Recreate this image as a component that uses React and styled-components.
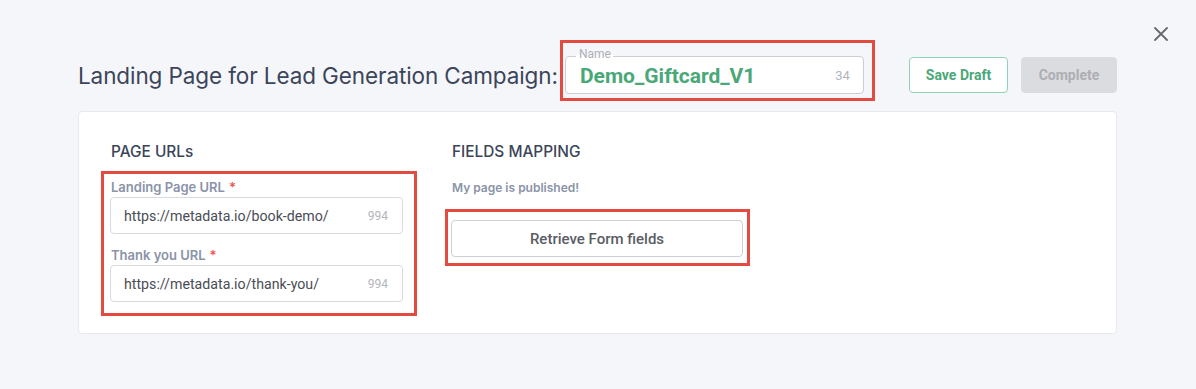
import React from 'react';
import styled, { createGlobalStyle } from 'styled-components';

const GlobalStyle = createGlobalStyle`
  html, body {
    margin: 0;
    padding: 0;
    background: #f5f6fa;
  }
  body {
    font-family: Roboto, "Liberation Sans", Arial, sans-serif;
    -webkit-font-smoothing: antialiased;
  }
  * { box-sizing: border-box; }
`;

const Page = styled.div`
  position: relative;
  width: 1196px;
  height: 389px;
  padding: 57px 79px 0 78px;
  background: #f5f6fa;
`;

const CloseButton = styled.button`
  position: absolute;
  top: 26px;
  right: 27px;
  width: 16px;
  height: 16px;
  padding: 0;
  border: none;
  background: transparent;
  cursor: pointer;
  display: flex;
  align-items: center;
  justify-content: center;
`;

const Header = styled.div`
  display: flex;
  align-items: center;
  height: 36px;
`;

const Title = styled.h1`
  margin: 0;
  font-family: Inter, "Liberation Sans", sans-serif;
  font-size: 22.5px;
  font-weight: 400;
  color: #3b4559;
  white-space: nowrap;
  letter-spacing: -0.1px;
`;

/* annotation frame drawn over the content */
const Highlight = styled.div`
  position: relative;
  margin-left: ${(p) => p.$ml || 0}px;

  &::after {
    content: '';
    position: absolute;
    top: ${(p) => p.$t}px;
    right: ${(p) => p.$r}px;
    bottom: ${(p) => p.$b}px;
    left: ${(p) => p.$l}px;
    border: 3px solid #e34b40;
    pointer-events: none;
  }
`;

const NameField = styled.div`
  position: relative;
  width: 299px;
  height: 38px;
  border: 1px solid #cdced3;
  border-radius: 4px;
  background: #fff;
  display: flex;
  align-items: center;
  padding: 0 13px 0 14px;
`;

const FloatLabel = styled.span`
  position: absolute;
  top: -10px;
  left: 10px;
  padding: 0 2px 0 3px;
  background: linear-gradient(to bottom, #f5f6fa 55%, #fff 55%);
  font-size: 12px;
  line-height: 15px;
  color: #aeb0b8;
`;

const NameValue = styled.span`
  flex: 1;
  font-size: 21px;
  font-weight: 700;
  color: #4aa878;
  padding-top: 2px;
`;

const Counter = styled.span`
  font-size: ${(p) => p.$size || 12}px;
  color: #b3b5bc;
`;

const Actions = styled.div`
  margin-left: auto;
  display: flex;
  gap: 13px;
`;

const ActionButton = styled.button`
  height: 36px;
  width: ${(p) => p.$w}px;
  border-radius: 4px;
  font-family: Roboto, "Liberation Sans", sans-serif;
  font-size: 14px;
  font-weight: 700;
  cursor: ${(p) => (p.disabled ? 'default' : 'pointer')};
  border: 1px solid ${(p) => (p.$primary ? '#90d2b4' : '#dbdcdf')};
  background: ${(p) => (p.$primary ? '#fff' : '#dbdcdf')};
  color: ${(p) => (p.$primary ? '#4aa878' : '#adaeb3')};
`;

const Card = styled.div`
  margin-top: 18px;
  background: #fff;
  border: 1px solid #e7e9ef;
  border-radius: 4px;
  padding: 30px 31px 31px 31px;
  display: grid;
  grid-template-columns: 293px 292px;
  column-gap: 48px;
  align-items: start;
`;

const Column = styled.div`
  display: flex;
  flex-direction: column;
`;

const SectionTitle = styled.h2`
  margin: 0 0 17px 1px;
  font-family: Inter, "Liberation Sans", sans-serif;
  font-size: 15.4px;
  line-height: 20px;
  font-weight: 500;
  color: #3b4559;
`;

const FieldGroup = styled.div`
  display: flex;
  flex-direction: column;
`;

const FieldLabel = styled.label`
  margin: ${(p) => (p.$first ? 0 : 13)}px 0 2px 1px;
  font-family: Inter, "Liberation Sans", sans-serif;
  font-size: 13px;
  line-height: 16px;
  font-weight: 600;
  color: #8a93a8;

  em {
    font-style: normal;
    color: #ef5350;
    margin-left: 4px;
  }
`;

const Hint = styled.p`
  margin: 1px 0 24px 1px;
  font-family: Inter, "Liberation Sans", sans-serif;
  font-size: 12px;
  line-height: 16px;
  font-weight: 600;
  color: #8a93a8;
`;

const UrlInput = styled.div`
  height: 37px;
  border: 1px solid #d9dadd;
  border-radius: 4px;
  display: flex;
  align-items: center;
  padding: 0 14px 0 13px;
  font-size: 14.2px;
  color: #4a4d55;
`;

const UrlText = styled.span`
  flex: 1;
`;

const OutlineButton = styled.button`
  width: 292px;
  height: 37px;
  border: 1px solid #cfd0d4;
  border-radius: 4px;
  background: #fff;
  font-family: Roboto, "Liberation Sans", sans-serif;
  font-size: 15px;
  font-weight: 500;
  color: #5a5d65;
  cursor: pointer;
`;

const urls = [
  { label: 'Landing Page URL', value: 'https://metadata.io/book-demo/', count: 994 },
  { label: 'Thank you URL', value: 'https://metadata.io/thank-you/', count: 994 },
];

export default function App() {
  return (
    <>
      <GlobalStyle />
      <Page>
        <CloseButton aria-label="Close">
          <svg width="14" height="14" viewBox="0 0 14 14">
            <path d="M1 1L13 13M13 1L1 13" stroke="#666a70" strokeWidth="1.8" strokeLinecap="round" />
          </svg>
        </CloseButton>

        <Header>
          <Title>Landing Page for Lead Generation Campaign:</Title>
          <Highlight $ml={7} $t={-16} $r={-11} $b={-7} $l={-5}>
            <NameField>
              <FloatLabel>Name</FloatLabel>
              <NameValue>Demo_Giftcard_V1</NameValue>
              <Counter $size={13}>34</Counter>
            </NameField>
          </Highlight>
          <Actions>
            <ActionButton $primary $w={99}>Save Draft</ActionButton>
            <ActionButton disabled $w={96}>Complete</ActionButton>
          </Actions>
        </Header>

        <Card>
          <Column>
            <SectionTitle>PAGE URLs</SectionTitle>
            <Highlight $t={-8} $r={-14} $b={-14} $l={-9}>
              <FieldGroup>
                {urls.map((u, i) => (
                  <React.Fragment key={u.label}>
                    <FieldLabel $first={i === 0}>
                      {u.label}<em>*</em>
                    </FieldLabel>
                    <UrlInput>
                      <UrlText>{u.value}</UrlText>
                      <Counter>{u.count}</Counter>
                    </UrlInput>
                  </React.Fragment>
                ))}
              </FieldGroup>
            </Highlight>
          </Column>

          <Column>
            <SectionTitle>FIELDS MAPPING</SectionTitle>
            <Hint>My page is published!</Hint>
            <Highlight $t={-11} $r={-7} $b={-9} $l={-6}>
              <OutlineButton>Retrieve Form fields</OutlineButton>
            </Highlight>
          </Column>
        </Card>
      </Page>
    </>
  );
}
